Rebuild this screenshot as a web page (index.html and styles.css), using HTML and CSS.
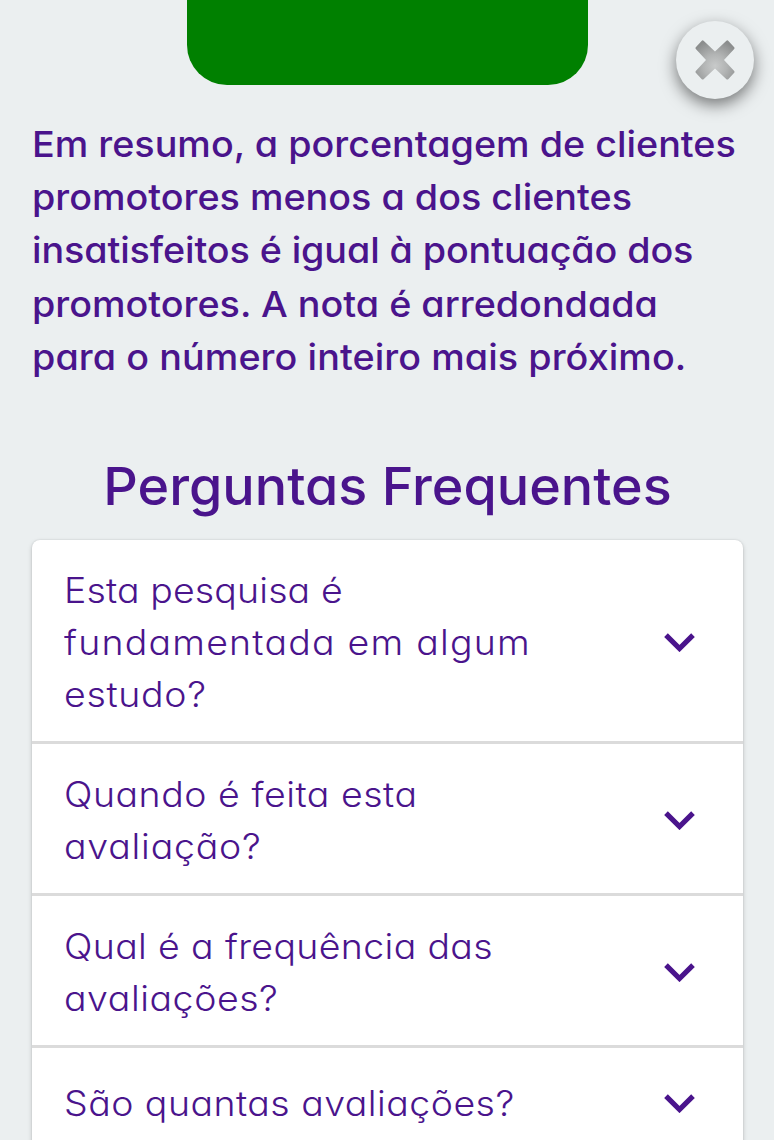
FILE: index.html
```
<!DOCTYPE html>
<html lang="pt-BR">
<head>
<meta charset="utf-8">
<title>Perguntas Frequentes</title>
<link rel="stylesheet" href="styles.css">
</head>
<body>
<button class="close" aria-label="Fechar">
  <svg width="40" height="40" viewBox="0 0 40 40">
    <defs><radialGradient id="shade" gradientUnits="userSpaceOnUse" cx="20" cy="26" r="26"><stop offset="0" stop-color="#c8caca"/><stop offset=".45" stop-color="#b2b4b4"/><stop offset="1" stop-color="#8b8d8d"/></radialGradient></defs>
    <path d="M8.6 .7 20 11.6 31.4 .7Q32.3 0 33.2 .7L39.2 7.2Q40 8 39.2 8.9L29 20 39.2 31Q40 32 39.2 32.8L33.2 39.2Q32.3 40 31.4 39.2L20 28.6 8.6 39.2Q7.7 40 6.8 39.2L.8 32.8Q0 32 .8 31L11 20 .8 8.9Q0 8 .8 7.2L6.8 .7Q7.7 0 8.6 .7Z" fill="url(#shade)"/>
  </svg>
</button>
<main class="page">
  <div class="panel"></div>
  <p class="summary">
    <span class="line">Em resumo, a porcentagem de clientes</span>
    <span class="line">promotores menos a dos clientes</span>
    <span class="line s3">insatisfeitos é igual à pontuação dos</span>
    <span class="line">promotores. A nota é arredondada</span>
    <span class="line s5">para o número inteiro mais próximo.</span>
  </p>
  <h2 class="title">Perguntas Frequentes</h2>
  <section class="faq">
    <div class="item">
      <div class="question"><span class="line q1">Esta pesquisa é</span><span class="line q2">fundamentada em algum</span><span class="line q3">estudo?</span></div>
      <svg class="chevron" viewBox="0 0 31 19"><path d="M2 2.2 15.5 15.5 29 2.2"/></svg>
    </div>
    <div class="item">
      <div class="question"><span class="line q4">Quando é feita esta</span><span class="line q5">avaliação?</span></div>
      <svg class="chevron" viewBox="0 0 31 19"><path d="M2 2.2 15.5 15.5 29 2.2"/></svg>
    </div>
    <div class="item">
      <div class="question"><span class="line q6">Qual é a frequência das</span><span class="line q7">avaliações?</span></div>
      <svg class="chevron" viewBox="0 0 31 19"><path d="M2 2.2 15.5 15.5 29 2.2"/></svg>
    </div>
    <div class="item short">
      <div class="question"><span class="line q8">São quantas avaliações?</span></div>
      <svg class="chevron" viewBox="0 0 31 19"><path d="M2 2.2 15.5 15.5 29 2.2"/></svg>
    </div>
  </section>
</main>
</body>
</html>
```
FILE: styles.css
```
* { box-sizing: border-box; }
html, body { margin: 0; height: 1140px; overflow: hidden; }
body {
  background: #ebeff0;
  color: #4a148c;
  font-family: Inter, "Open Sans", sans-serif;
  font-feature-settings: "cv11";
}
.page { padding: 0 31px 0 32px; }
.panel {
  width: 401.5px;
  height: 85.3px;
  margin-left: 154.6px;
  background: green;
  border-radius: 0 0 40px 40px;
}
.line { display: block; width: max-content; white-space: nowrap; transform-origin: 0 50%; }
.summary {
  margin: 32.7px 0 0;
  font-size: 36px;
  line-height: 53.25px;
  font-weight: 540;
}
.summary .line { transform: scaleX(1.048); }
.s3 { letter-spacing: -.1px; }
.s5 { letter-spacing: .07px; }
.title {
  margin: 62.8px 0 0;
  text-align: center;
  font-size: 52.5px;
  line-height: 78px;
  font-weight: 550;
  white-space: nowrap;
  transform: scaleX(1.026);
}
.faq {
  margin-top: 14.9px;
  background: #fff;
  border-radius: 8px;
  box-shadow: 0 2px 5px rgba(0,0,0,.18), 0 0 2px rgba(0,0,0,.12);
}
.item {
  display: flex;
  align-items: center;
  justify-content: space-between;
  padding: 24.4px 48px 20.6px 32px;
  border-bottom: 3px solid #dbdbdb;
}
.short { padding-top: 29.6px; }
.question { font-size: 35px; line-height: 52px; font-weight: 360; }
.question .line { transform: scaleX(1.07); }
.q1 { letter-spacing: .14px; }
.q2 { letter-spacing: 1.15px; }
.q3 { letter-spacing: .65px; }
.q4 { letter-spacing: .5px; }
.q5 { letter-spacing: .74px; }
.q6 { letter-spacing: .34px; }
.q7 { letter-spacing: .53px; }
.q8 { letter-spacing: .45px; }
.chevron { width: 31px; height: 19px; flex: none; }
.chevron path { fill: none; stroke: #4a148c; stroke-width: 5.2; }
.close {
  position: absolute;
  left: 675.5px;
  top: 21px;
  width: 78px;
  height: 78px;
  display: flex;
  align-items: center;
  justify-content: center;
  padding: 0;
  border: 0;
  border-radius: 50%;
  background: #ebeff0;
  box-shadow: 0 6px 16px rgba(0,0,0,.5);
}
```
